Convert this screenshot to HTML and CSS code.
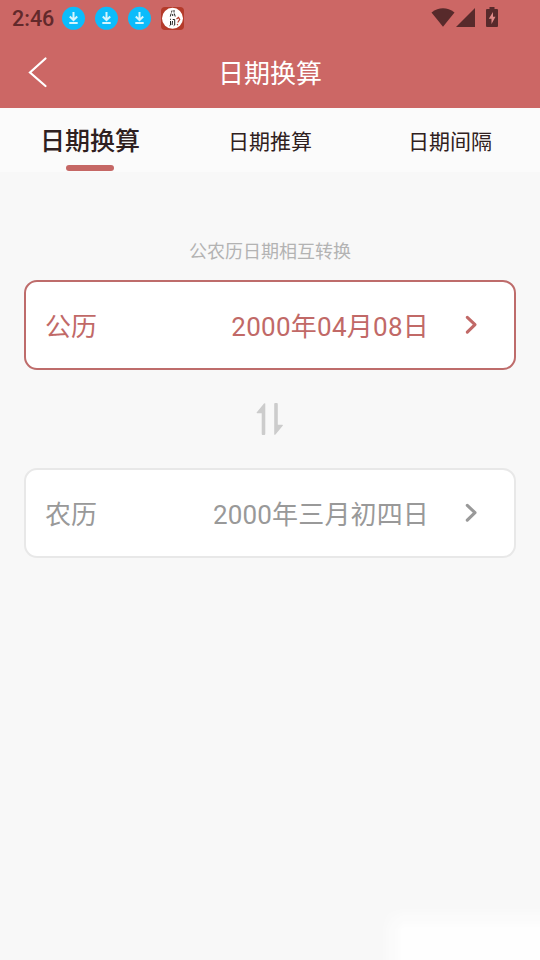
FILE: index.html
```html
<!DOCTYPE html>
<html lang="zh-CN">
<head>
<meta charset="utf-8">
<title>日期换算</title>
<link rel="stylesheet" href="styles.css">
</head>
<body>
<svg class="defs" width="0" height="0">
  <symbol id="download" viewBox="0 0 24 24">
    <circle cx="11.500" cy="12.300" r="11.500" fill="#0bbcfb"/>
    <path d="M11.500 6v8M7.800 10.500l3.700 3.700 3.700-3.700M7.300 17h8.400" fill="none" stroke="#d4f5fd" stroke-width="2"/>
  </symbol>
  <symbol id="chevron" viewBox="0 0 14 20">
    <path d="M2.300 2.400L10 9.700l-7.700 7.500" fill="none" stroke="currentColor" stroke-width="3.100" stroke-linecap="round" stroke-linejoin="round"/>
  </symbol>
</svg>
<header class="top">
  <div class="status">
    <span class="clock">2:46</span>
    <svg class="note"><use href="#download"/></svg>
    <svg class="note"><use href="#download"/></svg>
    <svg class="note"><use href="#download"/></svg>
    <svg class="app" viewBox="0 0 24 24">
      <rect x="0" y="1" width="23" height="23" rx="4" fill="#b43a2a"/>
      <circle cx="11.500" cy="12.300" r="10.500" fill="#fff"/>
      <path d="M11 4.500l-.5 2M13 4v2.500M9.300 10.500l.8-3M13.300 7.500l.9 3M11.700 8v2M9 13l1 .6M9.500 15v4l-1 .8M11.700 13.500h2v5.500l-1 .7M11.500 15l-.4 4" fill="none" stroke="#222" stroke-width="1"/>
      <path d="M15.500 13l2-1.500 1.200 2-2 3M16 19l.9-.7" fill="none" stroke="#b43a2a" stroke-width="1.200"/>
    </svg>
    <span class="grow"></span>
    <svg class="wifi" viewBox="0 0 24 19"><path d="M.5 4.400Q12-4 23.500 4.400L12 18.800z" fill="#572a2b"/></svg>
    <svg class="signal" viewBox="0 0 19 19"><path d="M19 0v19H0z" fill="#572a2b"/></svg>
    <svg class="battery" viewBox="0 0 12 20"><path d="M3.500 0h5v2H11q1 0 1 1v16q0 1-1 1H1q-1 0-1-1V3q0-1 1-1h2.500z" fill="#572a2b"/><path d="M7 5L2.800 11.800h2.700V17L9.500 9.800H7z" fill="#e08a88"/></svg>
  </div>
  <div class="bar">
    <svg class="back" viewBox="0 0 20 32"><path d="M17.500 2.500L2 16.500l15.500 13.500" fill="none" stroke="#fff" stroke-width="2.200" stroke-linecap="round"/></svg>
    <h1>日期换算</h1>
  </div>
</header>
<nav class="tabs">
  <a class="tab active">日期换算</a>
  <a class="tab">日期推算</a>
  <a class="tab">日期间隔</a>
</nav>
<main>
  <p class="hint">公农历日期相互转换</p>
  <div class="card solar">
    <span class="label">公历</span>
    <span class="date">2000年04月08日</span>
    <svg class="chev"><use href="#chevron"/></svg>
  </div>
  <svg class="swap" viewBox="0 0 28 32" fill="#ccc"><path d="M9.300.5v30a1.300 1.300 0 0 1-3.600 0V10.300H1.200Q0 10 1 9L8 .6Q9-.2 9.300.5z"/><path d="M18.200 31.500v-30a1.300 1.300 0 0 1 3.600 0v20.200h4.500q1.200.3.200 1.300l-7 8.400q-1 .8-1.300.1z"/></svg>
  <div class="card lunar">
    <span class="label">农历</span>
    <span class="date">2000年三月初四日</span>
    <svg class="chev"><use href="#chevron"/></svg>
  </div>
</main>
<div class="glow"></div>
</body>
</html>
```

FILE: styles.css
```css
* { box-sizing: border-box; }
body {
  margin: 0;
  height: 960px;
  position: relative;
  overflow: hidden;
  background: #f8f8f8;
  font-family: Roboto, "Noto Sans CJK SC", sans-serif;
}
svg { display: block; flex: none; }
.defs { position: absolute; }
.top { height: 108px; background: #cc6765; }
.status { height: 36px; padding: 0 42px 0 12px; display: flex; align-items: center; }
.clock { width: 42px; margin-right: 8px; font-size: 21.5px; font-weight: 500; color: #62292b; line-height: 36px; padding-top: 2px; white-space: nowrap; }
.note { width: 24px; height: 24px; margin-right: 9px; }
.app { width: 24px; height: 24px; }
.grow { flex: 1; }
.wifi { width: 24px; height: 19px; margin-right: 1px; margin-top: -1px; }
.signal { width: 19px; height: 19px; margin-right: 11px; margin-top: -1px; }
.battery { width: 12px; height: 20px; margin-top: -2px; }
.bar { height: 72px; display: grid; grid-template-columns: 80px 1fr 80px; align-items: center; }
.back { width: 20px; height: 32px; margin-left: 28px; }
h1 { margin: 0; padding-top: 4px; font-size: 26px; line-height: 68px; font-weight: 400; color: #fff; text-align: center; }
.tabs { height: 64px; background: #fbfbfb; display: grid; grid-template-columns: repeat(3, 1fr); }
.tab { display: flex; flex-direction: column; align-items: center; font-size: 21px; line-height: 68px; color: #2f2020; }
.active { font-size: 25px; line-height: 68px; font-weight: 500; }
.active::after { content: ""; width: 48px; height: 6px; margin-top: -11px; border-radius: 3px; background: #c56765; }
main { padding: 62px 24px 0; }
.hint { margin: 0; height: 46px; font-size: 18px; line-height: 35px; color: #b3b3b3; text-align: center; }
.card { height: 90px; display: flex; align-items: center; background: #fff; border: 2px solid; border-radius: 13px; padding: 0 35px 0 19px; font-size: 26px; line-height: 84px; }
.solar { border-color: #be6c6b; color: #c16967; }
.lunar { border-color: #e8e8e8; color: #999; }
.label { padding-top: 3px; }
.date { padding-top: 3px; margin-left: auto; margin-right: 36px; letter-spacing: .25px; }
.lunar .date { letter-spacing: .15px; }
.chev { width: 14px; height: 20px; }
.swap { width: 28px; height: 32px; margin: 33px auto; }
.glow {
  position: absolute;
  right: 0;
  bottom: 0;
  width: 160px;
  height: 54px;
  background: #fefefe;
  -webkit-mask: linear-gradient(to right, transparent, #000 24px), linear-gradient(transparent, #000 24px);
  -webkit-mask-composite: source-in;
  mask-composite: intersect;
}
```
